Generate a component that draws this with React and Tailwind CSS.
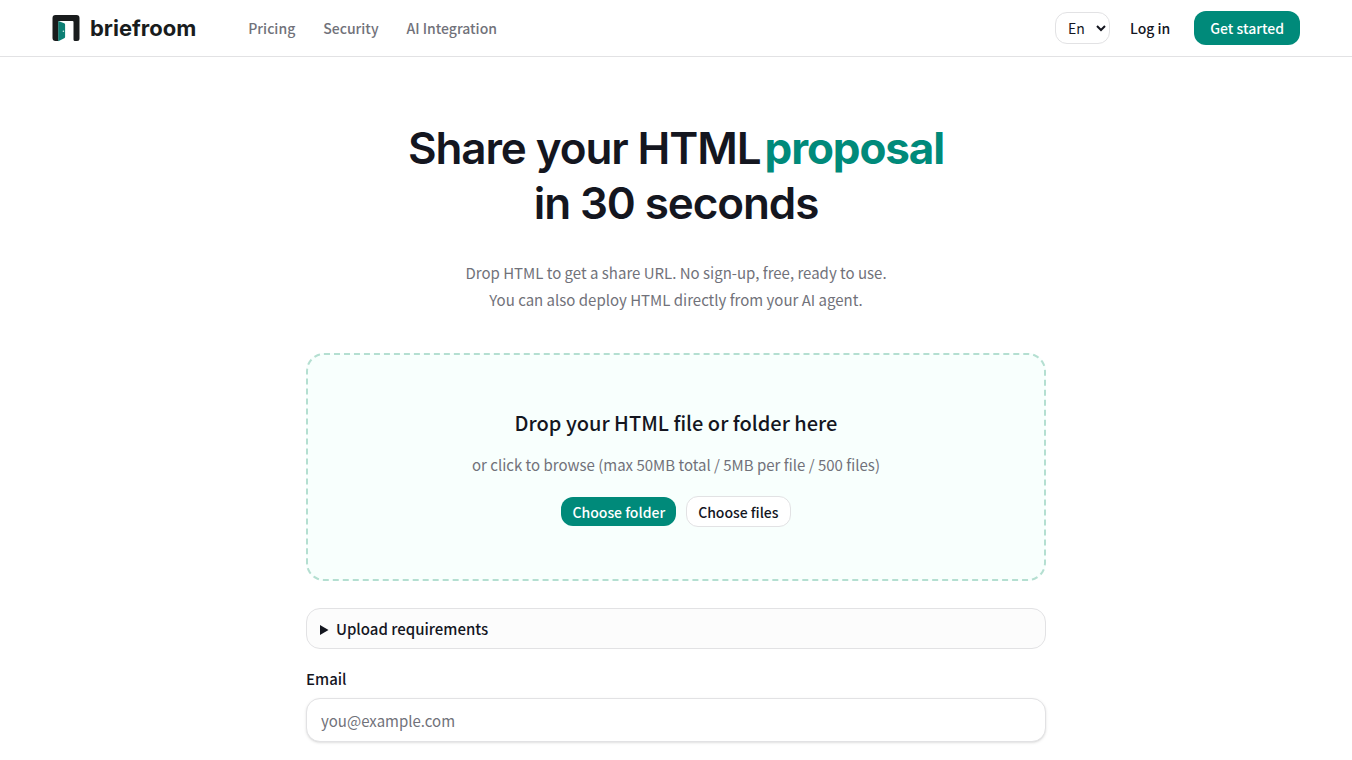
import { useState } from 'react';

const NAV_LINKS = [
    { label: 'Pricing', href: '#pricing' },
    { label: 'Security', href: '#security' },
    { label: 'AI Integration', href: '#ai-integration' },
];

const DoorIcon = () => (
    <svg viewBox="0 0 28 28" className="size-7" aria-hidden="true">
        <path
            d="M3.500 1h21a3 3 0 0 1 3 3v20.500a2.500 2.500 0 0 1-2.500 2.500h-2a1.500 1.500 0 0 1-1.500-1.500V8a1 1 0 0 0-1-1H6.500V27H3.500a3 3 0 0 1-3-3V4a3 3 0 0 1 3-3Z"
            fill="#191c1d"
        />
        <path d="M6.300 7 12.200 9.200q.9.300.9 1.200V23q0 .9-.9 1.300L6.300 27.200Z" fill="#0d7f74" />
        <circle cx="11.400" cy="17.200" r=".8" fill="#d7f2ec" />
    </svg>
);

const Header = ({ lang, setLang }) => (
    <header className="border-b border-[#e2e2e4] bg-white">
        <div className="mx-auto flex h-14 max-w-7xl items-center px-4">
            <a href="#home" className="flex items-center gap-2.5">
                <DoorIcon />
                <span className="font-['Inter',sans-serif] text-[22px] font-bold text-[#191c1d]">briefroom</span>
            </a>

            <nav className="ml-13 flex items-center gap-7">
                {NAV_LINKS.map(link => (
                    <a key={link.label} href={link.href} className="text-sm font-medium text-[#71727a]">
                        {link.label}
                    </a>
                ))}
            </nav>

            <div className="ml-auto flex items-center">
                <select
                    aria-label="Language"
                    value={lang}
                    onChange={e => setLang(e.target.value)}
                    className="h-8 rounded-xl border border-[#e2e2e4] bg-white px-2 text-sm"
                >
                    <option value="en">En</option>
                    <option value="ja">Ja</option>
                </select>
                <a href="#login" className="ml-5 text-sm font-medium">
                    Log in
                </a>
                <a
                    href="#start"
                    className="ml-6 flex h-[34px] items-center rounded-xl bg-[#008a7a] px-4 text-sm font-medium text-white"
                >
                    Get started
                </a>
            </div>
        </div>
    </header>
);

const App = () => {
    const [lang, setLang] = useState('en');
    const [email, setEmail] = useState('');

    return (
        <div className="min-h-screen bg-white font-['Noto_Sans_CJK_JP',sans-serif] text-[#14161f]">
            <Header lang={lang} setLang={setLang} />

            <main className="mx-auto max-w-[772px] px-4 pt-16 pb-4">
                <h1 className="text-center font-['Inter',sans-serif] text-[44px] leading-[55px] font-semibold tracking-tight">
                    Share your HTML
                    <span className="ml-1 font-bold text-[#008a7a]">proposal</span>
                    <br />
                    in 30 seconds
                </h1>
                <p className="mt-7 text-center text-[15px] leading-[27px] text-[#71727a]">
                    Drop HTML to get a share URL. No sign-up, free, ready to use.
                    <br />
                    You can also deploy HTML directly from your AI agent.
                </p>

                <section className="mt-10 flex flex-col items-center rounded-[18px] border-2 border-dashed border-[#b4dfd1] bg-[#f8fffd] px-6 py-13">
                    <h2 className="text-xl leading-8 font-medium">Drop your HTML file or folder here</h2>
                    <p className="mt-3 text-[15px] leading-[27px] text-[#71727a]">
                        or click to browse (max 50MB total / 5MB per file / 500 files)
                    </p>
                    <div className="mt-[18px] flex items-center gap-2.5">
                        <button type="button" className="h-[29px] rounded-xl bg-[#008a7a] px-[11px] text-sm font-medium text-white">
                            Choose folder
                        </button>
                        <button
                            type="button"
                            className="h-[31px] rounded-xl border border-[#e2e2e4] bg-white px-[11px] text-sm font-medium"
                        >
                            Choose files
                        </button>
                    </div>
                </section>

                <details className="mt-[27px] rounded-[14px] border border-[#e2e2e4] bg-[#fcfcfc] px-[13px] py-1.5">
                    <summary className="text-[15px] leading-[27px] font-medium">Upload requirements</summary>
                    <p className="mt-2 text-sm text-[#71727a]">Max 50MB total, 5MB per file, up to 500 files.</p>
                </details>

                <label htmlFor="email" className="mt-4 block text-[15px] leading-[27px] font-medium">
                    Email
                </label>
                <input
                    id="email"
                    type="email"
                    placeholder="you@example.com"
                    value={email}
                    onChange={e => setEmail(e.target.value)}
                    className="mt-1.5 h-11 w-full rounded-[14px] border border-[#e2e2e4] bg-white px-3.5 text-[15px] shadow-sm placeholder:text-[#71727a]"
                />
            </main>
        </div>
    );
};

export default App;
